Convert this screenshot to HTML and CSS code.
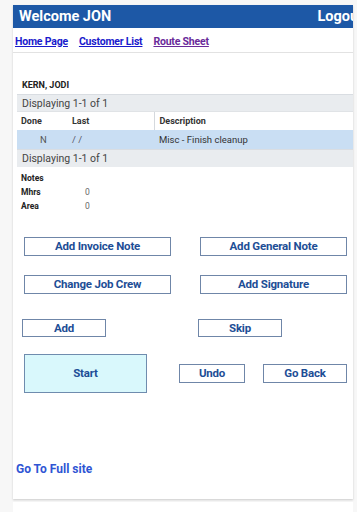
FILE: index.html
```html
<!DOCTYPE html>
<html lang="en">

<head>
    <meta charset="UTF-8">
    <meta name="viewport" content="width=device-width, initial-scale=1.0">
    <title>Job Detail</title>

    <link rel="stylesheet" href="styles.css">
</head>

<body>
    <div class="page">
        <div class="header">
            <span class="welcome">Welcome JON</span>
            <a class="logout" href="#">Logout</a>
        </div>

        <div class="nav">
            <a href="#">Home Page</a>
            <a href="#">Customer List</a>
            <a class="visited" href="#">Route Sheet</a>
        </div>

        <div class="content">
            <div class="customer">KERN, JODI</div>

            <table class="grid">
                <tr class="pager">
                    <td colspan="3">Displaying 1-1 of 1</td>
                </tr>
                <tr class="head">
                    <th class="col-done">Done</th>
                    <th class="col-last">Last</th>
                    <th class="col-desc">Description</th>
                </tr>
                <tr class="row">
                    <td class="col-done">N</td>
                    <td class="col-last">/ /</td>
                    <td class="col-desc">Misc - Finish cleanup</td>
                </tr>
                <tr class="pager">
                    <td colspan="3">Displaying 1-1 of 1</td>
                </tr>
            </table>

            <div class="info">
                <div class="info-row"><span class="label">Notes</span></div>
                <div class="info-row"><span class="label">Mhrs</span><span class="value">0</span></div>
                <div class="info-row"><span class="label">Area</span><span class="value">0</span></div>
            </div>

            <div class="buttons">
                <div class="btn-row">
                    <button class="btn wide">Add Invoice Note</button>
                    <button class="btn wide">Add General Note</button>
                </div>
                <div class="btn-row">
                    <button class="btn wide">Change Job Crew</button>
                    <button class="btn wide">Add Signature</button>
                </div>
                <div class="btn-row small-row">
                    <button class="btn short">Add</button>
                    <button class="btn short">Skip</button>
                </div>
                <div class="btn-row last-row">
                    <button class="btn start">Start</button>
                    <button class="btn undo">Undo</button>
                    <button class="btn back">Go Back</button>
                </div>
            </div>

            <a class="full-site" href="#">Go To Full site</a>
        </div>
    </div>
    <div class="page-below"></div>
</body>

</html>
```

FILE: styles.css
```css
* {
    margin: 0;
    padding: 0;
    box-sizing: border-box;
}

body {
    background-color: #f7f7f7;
    font-family: Roboto, "Liberation Sans", sans-serif;
    padding: 5px 4px 0 13px;
    overflow: hidden;
}

.page {
    width: 340px;
    height: 494px;
    background-color: #fff;
    box-shadow: 0 1px 2px rgba(0, 0, 0, 0.18);
}

.page-below {
    width: 340px;
    height: 20px;
    margin-top: 3px;
    background-color: #fff;
}

.header {
    display: flex;
    height: 23px;
    align-items: center;
    justify-content: space-between;
    overflow: hidden;
    padding-left: 6px;
    background-color: #1d58a6;
}

.welcome,
.logout {
    color: #fff;
    font-size: 14.5px;
    font-weight: bold;
    text-decoration: none;
}

.logout {
    margin-right: -10px;
}

.nav {
    display: flex;
    gap: 11px;
    height: 25px;
    align-items: center;
    padding-left: 2px;
    padding-top: 2px;
    border-bottom: 1px solid #e2e2e2;
}

.nav a {
    color: #1a1acc;
    font-size: 10.5px;
    font-weight: bold;
    letter-spacing: -0.2px;
}

.nav a.visited {
    color: #6a2a9a;
}

.content {
    padding: 27px 0 0 4px;
}

.customer {
    padding-left: 5px;
    font-size: 9px;
    font-weight: bold;
    color: #222;
    height: 14px;
    line-height: 10px;
}

.grid {
    width: 100%;
    border-collapse: collapse;
    font-size: 10px;
    color: #333;
}

.grid .pager td {
    height: 17px;
    padding-left: 5px;
    font-size: 10.5px;
    background-color: #e9ecef;
    color: #444;
    border-top: 1px solid #d9dde2;
}

.grid th {
    height: 18px;
    text-align: left;
    font-size: 9px;
    font-weight: bold;
    color: #333;
    border-top: 1px solid #e0e3e6;
}

.grid .head .col-desc {
    border-left: 1px solid #d5d9de;
}

.grid .row td {
    height: 20px;
    background-color: #c9def3;
    font-size: 9.5px;
    color: #333;
}

.grid .row .col-done {
    padding-left: 23px;
    color: #555;
}

.grid .row .col-last {
    color: #556;
}

.grid .row .col-desc {
    padding-left: 5px;
}

.col-done {
    width: 55px;
    padding-left: 4px;
}

.col-last {
    width: 82px;
}

.col-desc {
    padding-left: 5px;
}

.info {
    padding: 4px 0 0 4px;
    font-size: 8.5px;
    color: #222;
}

.info-row {
    display: flex;
    height: 14px;
    align-items: center;
}

.label {
    width: 64px;
    font-weight: bold;
}

.value {
    color: #666;
}

.buttons {
    display: flex;
    flex-direction: column;
    padding-top: 24px;
}

.btn-row {
    display: flex;
    gap: 29px;
    padding-left: 7px;
    margin-bottom: 19px;
}

.btn {
    height: 19px;
    background-color: #fff;
    border: 1px solid #6f86a8;
    color: #1d4e96;
    font-family: Roboto, "Liberation Sans", sans-serif;
    font-size: 11.5px;
    font-weight: bold;
    letter-spacing: -0.2px;
}

.wide {
    width: 147px;
}

.small-row {
    padding-left: 5px;
    gap: 92px;
    margin-top: 6px;
    margin-bottom: 17px;
}

.short {
    width: 84px;
    height: 18px;
}

.last-row {
    align-items: center;
    gap: 0;
    margin-bottom: 0;
}

.start {
    width: 123px;
    height: 39px;
    background-color: #d9f8fc;
    border-color: #6f8cae;
    font-size: 11.5px;
}

.undo {
    width: 66px;
    margin-left: 32px;
}

.back {
    width: 84px;
    margin-left: 18px;
}

.full-site {
    display: block;
    margin-top: 69px;
    margin-left: -1px;
    color: #2f55d4;
    font-size: 12px;
    font-weight: bold;
    text-decoration: none;
}
```
